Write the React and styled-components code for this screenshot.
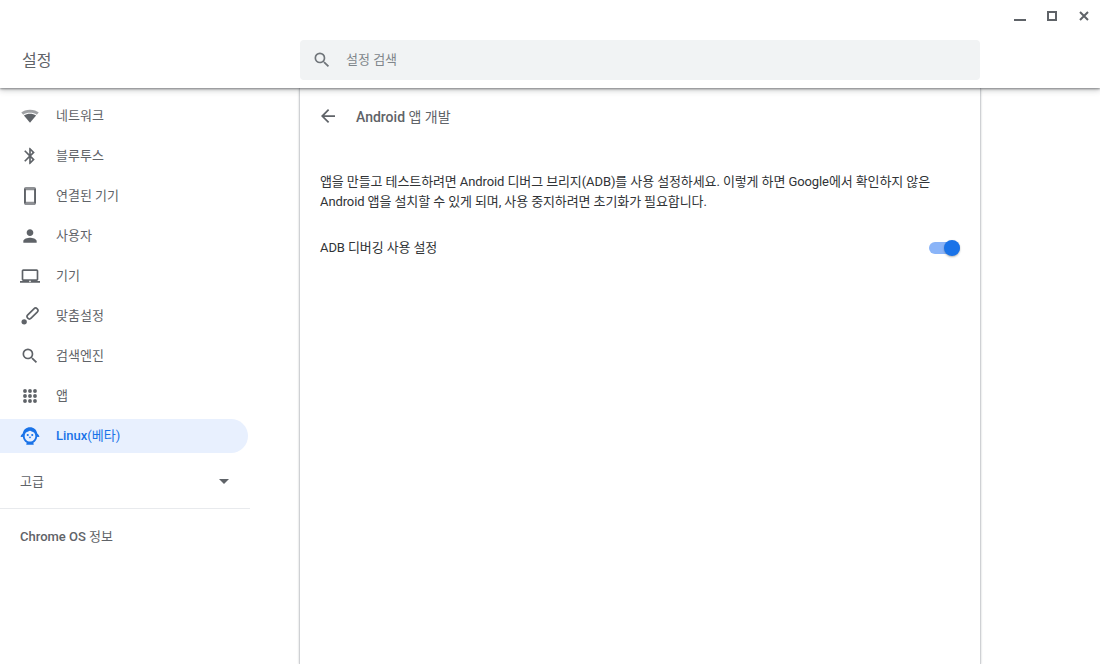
import styled, { createGlobalStyle } from "styled-components";

const menuItems = [
  { label: "네트워크", icon: "wifi" },
  { label: "블루투스", icon: "bluetooth" },
  { label: "연결된 기기", icon: "phone" },
  { label: "사용자", icon: "person" },
  { label: "기기", icon: "laptop" },
  { label: "맞춤설정", icon: "brush" },
  { label: "검색엔진", icon: "search" },
  { label: "앱", icon: "apps" },
  { label: "(베타)", latin: "Linux", icon: "linux", active: true },
];

const iconPaths = {
  wifi: (
    <>
      <path
        opacity=".6"
        d="M12 4.500C7.500 4.500 3.800 5.900 1.500 7.800L3.900 10.500C6 9 8.800 8.200 12 8.200s6 .8 8.100 2.300l2.400-2.700C20.200 5.900 16.500 4.500 12 4.500z"
      />
      <path d="M4.700 11.400C7 9.900 9.300 9.200 12 9.200s5 .7 7.300 2.200L12 20z" />
    </>
  ),
  bluetooth: <path d="M17.710 7.710 12 2h-1v7.590L6.410 5 5 6.410 10.590 12 5 17.590 6.410 19 11 14.410V22h1l5.710-5.710-4.300-4.290 4.300-4.290zM13 5.830l1.880 1.880L13 9.590V5.830zm1.880 10.460L13 18.170v-3.760l1.880 1.880z" />,
  phone: (
    <>
      <path
        opacity=".7"
        fillRule="evenodd"
        d="M7 1.200h10c1.200 0 2.200 1 2.200 2.200v17.200c0 1.200-1 2.200-2.200 2.200H7c-1.200 0-2.200-1-2.200-2.200V3.400c0-1.200 1-2.200 2.200-2.200zM7 5v14h10V5z"
      />
      <path d="M4.800 3.400h2.200v17.200H4.800zM17 3.400h2.200v17.200H17z" />
    </>
  ),
  person: <path d="M12 12c2.210 0 4-1.790 4-4s-1.790-4-4-4-4 1.790-4 4 1.790 4 4 4zm0 2c-2.670 0-8 1.340-8 4v2h16v-2c0-2.660-5.330-4-8-4z" />,
  laptop: <path d="M20 18c1.100 0 1.990-.9 1.990-2L22 6c0-1.100-.9-2-2-2H4c-1.100 0-2 .9-2 2v10c0 1.100.9 2 2 2H0v2h24v-2h-4zM4 6h16v10H4V6zm8 13.500c-.55 0-1-.45-1-1s.45-1 1-1 1 .45 1 1-.45 1-1 1z" />,
  brush: (
    <>
      <circle cx="5" cy="19" r="3.200" />
      <rect
        x="-2.800"
        y="-8"
        width="5.600"
        height="16"
        rx="2.800"
        fill="none"
        stroke="currentColor"
        strokeWidth="2"
        transform="translate(15 9) rotate(45)"
      />
    </>
  ),
  search: <path d="M15.500 14h-.79l-.28-.27A6.470 6.470 0 0 0 16 9.500 6.500 6.500 0 1 0 9.500 16c1.610 0 3.090-.59 4.230-1.570l.27.28v.79l5 4.990L20.490 19l-4.990-5zm-6 0C7.010 14 5 11.990 5 9.500S7.010 5 9.500 5 14 7.010 14 9.500 11.990 14 9.500 14z" />,
  apps: (
    <>
      {[6, 12, 18].map((y) =>
        [6, 12, 18].map((x) => <circle key={`${x}-${y}`} cx={x} cy={y} r="2.300" />)
      )}
    </>
  ),
  linux: (
    <>
      <path
        fillRule="evenodd"
        d="M12 1.500C7.500 1.500 4 4.500 3.300 9 2 10 .9 11.500.6 13c.9.3 1.900.2 2.800-.2.4 3.200 2 5.900 4.600 7.400L7.500 22.500h9l-.5-2.300c2.600-1.500 4.200-4.200 4.600-7.400.9.400 1.900.5 2.800.2-.3-1.500-1.400-3-2.700-4C20 4.500 16.500 1.500 12 1.500zm0 4.200c.9 0 1.600.4 2 1 2.400.2 4.400 2.300 4.400 5.300 0 3.900-2.900 6.700-6.400 6.700S5.600 15.900 5.600 12c0-3 2-5.100 4.400-5.300.4-.6 1.100-1 2-1z"
      />
      <circle cx="9.300" cy="10.800" r="1.300" />
      <circle cx="14.700" cy="10.800" r="1.300" />
      <path d="M10.300 13h3.400L12 15z" />
    </>
  ),
};

function Icon({ name }) {
  return (
    <IconBox viewBox="0 0 24 24" fill="currentColor">
      {iconPaths[name]}
    </IconBox>
  );
}

export default function App() {
  return (
    <>
      <GlobalStyle />
      <Window>
        <Header>
          <WindowControls>
            <svg width="12" height="12" viewBox="0 0 12 12" fill="#5f6368">
              <rect x="0" y="9" width="12" height="2" />
            </svg>
            <svg width="12" height="12" viewBox="0 0 12 12" fill="none" stroke="#5f6368" strokeWidth="2">
              <rect x="2" y="2" width="8" height="8" />
            </svg>
            <svg width="12" height="12" viewBox="0 0 12 12" fill="none" stroke="#5f6368" strokeWidth="2">
              <path d="M2 2l8 8M10 2l-8 8" />
            </svg>
          </WindowControls>
          <TitleRow>
            <Title>설정</Title>
            <SearchBox>
              <SearchIcon viewBox="0 0 24 24" fill="currentColor">
                {iconPaths.search}
              </SearchIcon>
              <SearchHint>설정 검색</SearchHint>
            </SearchBox>
          </TitleRow>
        </Header>
        <Body>
          <Sidebar>
            <MenuList>
              {menuItems.map(({ label, latin, icon, active }) => (
                <MenuItem key={label} $active={active}>
                  <Icon name={icon} />
                  <MenuLabel>
                    {latin && <Medium>{latin}</Medium>}
                    {label}
                  </MenuLabel>
                </MenuItem>
              ))}
            </MenuList>
            <AdvancedRow>
              <AdvancedLabel>고급</AdvancedLabel>
              <Caret />
            </AdvancedRow>
            <Divider />
            <AboutRow>
              <Medium>Chrome OS</Medium> 정보
            </AboutRow>
          </Sidebar>
          <Card>
            <SubpageHeader>
              <BackArrow width="14" height="14" viewBox="0 0 16 16" fill="#5f6368">
                <path d="M16 7H3.830l5.590-5.590L8 0 0 8l8 8 1.410-1.410L3.830 9H16z" />
              </BackArrow>
              <SubpageTitle>
                <Medium>Android</Medium> 앱 개발
              </SubpageTitle>
            </SubpageHeader>
            <Description>
              앱을 만들고 테스트하려면 Android 디버그 브리지(ADB)를 사용 설정하세요. 이렇게 하면 Google에서 확인하지 않은
              <br />
              Android 앱을 설치할 수 있게 되며, 사용 중지하려면 초기화가 필요합니다.
            </Description>
            <SettingRow>
              <SettingLabel>ADB 디버깅 사용 설정</SettingLabel>
              <Toggle>
                <ToggleKnob />
              </Toggle>
            </SettingRow>
          </Card>
        </Body>
      </Window>
    </>
  );
}

const GlobalStyle = createGlobalStyle`
  html, body {
    margin: 0;
    height: 100%;
    overflow: hidden;
    background: #fff;
  }
  body {
    font-family: Roboto, "Noto Sans CJK KR", sans-serif;
    font-size: 13px;
    color: #3c4043;
  }
`;

const Window = styled.div`
  width: 1100px;
  height: 664px;
  display: flex;
  flex-direction: column;
  overflow: hidden;
`;

const Header = styled.header`
  height: 88px;
  flex-shrink: 0;
  display: flex;
  flex-direction: column;
  position: relative;
  z-index: 1;
  background: #fff;
  box-shadow: 0 1px 2px rgba(60, 64, 67, 0.55), 0 2px 6px rgba(60, 64, 67, 0.3);
`;

const WindowControls = styled.div`
  height: 32px;
  padding-right: 10px;
  display: flex;
  justify-content: flex-end;
  align-items: center;
  gap: 20px;
`;

const TitleRow = styled.div`
  display: flex;
  align-items: center;
  padding-top: 8px;
`;

const Title = styled.h1`
  width: 300px;
  margin: 0;
  padding: 0 0 2px 22px;
  box-sizing: border-box;
  font-size: 16px;
  font-weight: 400;
  color: #5f6368;
`;

const SearchBox = styled.div`
  width: 680px;
  height: 40px;
  padding-left: 12px;
  box-sizing: border-box;
  display: flex;
  align-items: center;
  gap: 14px;
  border-radius: 4px;
  background: #f1f3f4;
`;

const SearchIcon = styled.svg`
  width: 20px;
  height: 20px;
  color: #70757a;
`;

const SearchHint = styled.span`
  padding-bottom: 4px;
  font-size: 13px;
  color: #80868b;
`;

const Body = styled.div`
  flex: 1;
  display: flex;
  min-height: 0;
`;

const Sidebar = styled.nav`
  width: 299px;
  flex-shrink: 0;
  padding-top: 11px;
  box-sizing: border-box;
  color: #5f6368;
`;

const MenuList = styled.div`
  display: flex;
  flex-direction: column;
  gap: 6px;
`;

const IconBox = styled.svg`
  width: 20px;
  height: 20px;
  flex-shrink: 0;
`;

const MenuItem = styled.div`
  width: 248px;
  height: 34px;
  padding-left: 20px;
  box-sizing: border-box;
  display: flex;
  align-items: center;
  gap: 16px;
  border-radius: 0 17px 17px 0;
  color: ${(p) => (p.$active ? "#1a73e8" : "#5f6368")};
  background: ${(p) => (p.$active ? "#e8f0fe" : "transparent")};
`;

const MenuLabel = styled.span`
  padding-bottom: 4px;
`;

const AdvancedLabel = styled.span`
  padding-bottom: 2px;
`;

const Medium = styled.span`
  font-weight: 500;
`;

const AdvancedRow = styled.div`
  width: 250px;
  height: 40px;
  margin-top: 8px;
  padding: 0 20px;
  box-sizing: border-box;
  display: flex;
  align-items: center;
  justify-content: space-between;
`;

const Caret = styled.span`
  margin-right: 1px;
  border-left: 5px solid transparent;
  border-right: 5px solid transparent;
  border-top: 5px solid #5f6368;
`;

const Divider = styled.div`
  width: 250px;
  height: 1px;
  margin-top: 7px;
  background: #e8eaed;
`;

const AboutRow = styled.div`
  padding: 17px 20px 0;
`;

const Card = styled.main`
  width: 682px;
  box-sizing: border-box;
  padding: 8px 20px 0;
  border-left: 1px solid #cfd1d4;
  border-right: 1px solid #cfd1d4;
  box-shadow: 0 0 2px rgba(60, 64, 67, 0.25);
`;

const SubpageHeader = styled.div`
  height: 40px;
  display: flex;
  align-items: center;
`;

const BackArrow = styled.svg`
  margin: 0 21px 0 1px;
`;

const SubpageTitle = styled.h2`
  margin: 0;
  font-size: 14px;
  font-weight: 400;
  color: #5f6368;
`;

const Description = styled.p`
  margin: 36px 0 0;
  line-height: 20px;
  letter-spacing: -0.1px;
  color: #303336;
`;

const SettingRow = styled.div`
  margin-top: 26px;
  height: 20px;
  display: flex;
  align-items: center;
  justify-content: space-between;
`;

const SettingLabel = styled.span`
  padding-bottom: 4px;
  letter-spacing: -0.1px;
  color: #303336;
`;

const Toggle = styled.div`
  width: 31px;
  height: 12px;
  display: flex;
  align-items: center;
  justify-content: flex-end;
  border-radius: 6px;
  background: #8ab4f8;
`;

const ToggleKnob = styled.div`
  width: 16px;
  height: 16px;
  flex-shrink: 0;
  border-radius: 50%;
  background: #1a73e8;
  box-shadow: 0 1px 2px rgba(60, 64, 67, 0.4);
`;
